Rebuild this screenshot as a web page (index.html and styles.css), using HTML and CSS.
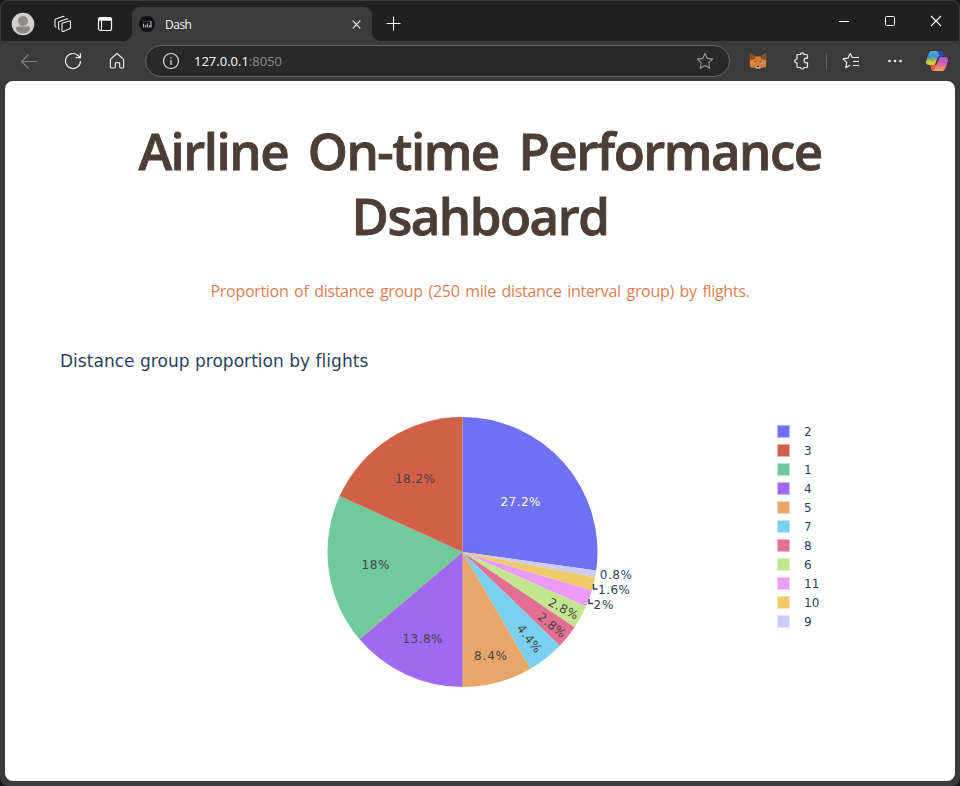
FILE: index.html
```html
<!DOCTYPE html>
<html lang="en">
<head>
<meta charset="utf-8">
<title>Dash</title>
<link rel="stylesheet" href="styles.css">
</head>
<body>
<div class="window">
  <header class="tabstrip">
    <div class="strip-tools">
      <svg class="avatar" width="24" height="24" viewBox="0 0 24 24"><circle cx="12" cy="12" r="11.3" fill="#d0cfcb"/><circle cx="12" cy="9" r="5" fill="#8b8a87"/><path d="M5 16.2q0-1.7 1.7-1.7h10.6q1.7 0 1.7 1.7c-.7 3.3-3.5 5.3-7 5.3s-6.300-2-7-5.300z" fill="#8b8a87"/></svg>
      <svg class="workspaces" width="18" height="18" viewBox="0 0 18 18"><g fill="none" stroke="#eee" stroke-width="1.1" stroke-linejoin="round"><path d="M8 8.300 15.300 6q1.200-.3 1.200.8v5.900q0 .8-.8 1.100l-6.500 2.600q-1.200.4-1.200-.8z"/><path d="M5.800 14.500 5 14.100q-.4-.3-.4-.9V7.700q0-.9.800-1.200l7-2.600q1-.3 1.300.6M2.400 12.300l-.9-.5q-.5-.3-.5-.9V5.300q0-.9.800-1.200l7-2.600q1-.3 1.300.6"/></g></svg>
      <svg class="tabs-icon" width="16" height="16" viewBox="0 0 16 16"><rect x="1.500" y="1.500" width="13" height="13" rx="2" fill="none" stroke="#f5f5f5" stroke-width="1.200"/><path d="M1.500 2.500q0-1 1-1h11q1 0 1 1v2.200h-13z" fill="#f5f5f5"/><path d="M4.500 4.500v10" stroke="#f5f5f5" stroke-width="1.100"/></svg>
    </div>
    <div class="tab">
      <svg width="16" height="16" viewBox="0 0 16 16"><circle cx="8" cy="8" r="8" fill="#101114"/><path d="M4.500 7.500v4M6.500 9v2.500M8.500 7.500v4M10.500 9v2.500M12 5v6.500" stroke="#aeb0b6" stroke-width="1.200"/><path d="M4 5.400h5" stroke="#8e4a78" stroke-width="1" stroke-dasharray="1 1"/><path d="M9.800 5h1" stroke="#669bd0"/></svg>
      <span class="tab-title">Dash</span>
      <svg class="tab-close" width="9" height="9" viewBox="0 0 9 9"><path d="M.7.7l7.600 7.600M8.300.7.7 8.300" stroke="#eee" stroke-width="1.200"/></svg>
    </div>
    <svg class="new-tab" width="15" height="15" viewBox="0 0 15 15"><path d="M7.500 .5v14M.5 7.500h14" stroke="#fff" stroke-width="1.100"/></svg>
    <div class="controls">
      <svg width="12" height="12" viewBox="0 0 12 12"><path d="M1 6.500h10" stroke="#fff"/></svg>
      <svg width="12" height="12" viewBox="0 0 12 12"><rect x="1.500" y="1.500" width="9" height="9" rx="1" fill="none" stroke="#fff"/></svg>
      <svg width="12" height="12" viewBox="0 0 12 12"><path d="m1 1 10 10M11 1 1 11" stroke="#fff" stroke-width="1.100"/></svg>
    </div>
  </header>

  <nav class="toolbar">
    <div class="nav-icons">
      <svg width="18" height="18" viewBox="0 0 18 18"><path d="M17 9.500H1.500M8.500 2.500l-7 7 7 7" fill="none" stroke="#858585" stroke-width="1.100"/></svg>
      <svg width="18" height="18" viewBox="0 0 18 18"><path d="M16.500 9A7.500 7.500 0 1 1 14.600 4l1.900 1.700M16.500 1.200v4.500h-4.700" fill="none" stroke="#eee" stroke-width="1.200"/></svg>
      <svg width="18" height="18" viewBox="0 0 18 18"><path d="M2.400 8q0-.7.500-1.200L8.300 2q.7-.6 1.400 0l5.400 4.800q.5.500.5 1.200v7.200q0 .8-.8.800h-2.200q-.9 0-.9-.9v-3.500q0-1-1-1H8.300q-1 0-1 1v3.500q0 .9-.9.900H3.200q-.8 0-.8-.8z" fill="none" stroke="#eee" stroke-width="1.150"/></svg>
    </div>
    <div class="address">
      <svg width="18" height="18" viewBox="0 0 18 18"><circle cx="9" cy="9" r="7.500" fill="none" stroke="#ddd" stroke-width="1.200"/><path d="M9 8v5M9 5v1.500" stroke="#ddd" stroke-width="1.300"/></svg>
      <span class="url">127.0.0.1<span class="port">:8050</span></span>
      <svg class="fav" width="18" height="18" viewBox="0 0 18 18"><path d="m9 1.500 2.300 4.900 5.300.7-3.900 3.700 1 5.400L9 13.600l-4.700 2.600 1-5.400-3.900-3.700 5.300-.7z" fill="none" stroke="#999" stroke-width="1.100" stroke-linejoin="round"/></svg>
    </div>
    <svg class="fox" width="18" height="18" viewBox="0 0 18 18"><path d="m1 1 5.500 3.500h5L17 1l.3 7L17 15l-5 1-1.500 1h-3L6 16l-5-1L.7 8z" fill="#d97b35"/><path d="m1 1 6 4-2 2.500-4 .5zM17 1l-6 4 2 2.500 4 .5z" fill="#86502c"/><path d="m1 9 4-1 3 3-2 2-5-1zM17 9l-4-1-3 3 2 2 5-1z" fill="#e58a3b"/><path d="m5 9 2 .2.3 1.500zM13 9l-2 .2-.3 1.500z" fill="#263443"/><path d="m7 14 1-.5h2l1 .5-.5 2h-3z" fill="#dfd7d0"/><path d="M7.800 13.800h2.400v1.400H7.800z" fill="#241c22"/></svg>
    <svg class="puzzle" width="18" height="18" viewBox="0 0 18 18"><path d="M5 2.500h2.500C7.500.3 11 .3 11 2.500h2.500q1 0 1 1V6.200h-1.700c-2.200 0-2.200 4.700 0 4.700h1.700v3.600q0 1-1 1H11c0 2-3.500 2-3.500 0H5q-1 0-1-1V11c-3 0-3-4 0-4V3.500q0-1 1-1z" fill="none" stroke="#eee" stroke-width="1.200"/></svg>
    <span class="divider"></span>
    <svg class="favorites" width="18" height="18" viewBox="0 0 18 18"><path d="m10.200 5.400-2-3.900L6 6.200l-5 .7 3.700 3.500-.9 5.200L8 13.300M9.800 5.500H17M11 9.500h6M11 13.500h6" fill="none" stroke="#eee" stroke-width="1.200" stroke-linejoin="round"/></svg>
    <svg class="more" width="14" height="4" viewBox="0 0 14 4"><path d="M1.500 2h.1M7 2h.1M12.500 2h.1" stroke="#eee" stroke-width="2.600" stroke-linecap="round"/></svg>
    <svg class="copilot" width="24" height="22" viewBox="0 0 24 22">
      <defs><linearGradient id="cool" x1="0" y1="0" x2="0" y2="1"><stop stop-color="#55a8ef"/><stop offset=".4" stop-color="#3a91c9"/><stop offset=".8" stop-color="#cfd52d"/><stop offset="1" stop-color="#f0b92d"/></linearGradient><linearGradient id="warm" x1="0" y1="0" x2="0" y2="1"><stop stop-color="#9b54ee"/><stop offset=".5" stop-color="#e25b9f"/><stop offset="1" stop-color="#ffad52"/></linearGradient></defs>
      <path d="M7 1h8q2 0 2.500 2l1 3H15q-2 0-2.500 2L10 15H4q-3 0-3-3 1-5 3-9 1-2 3-2z" fill="url(#cool)"/><path d="M12 1h3q2 0 2.500 2l1 3h-4q-1-4-2.500-5z" fill="#2747c9"/><path d="M17 21H9q-2 0-2.600-2L5.500 15H9q2 0 2.600-2L14 7h6q3 0 3 3-1 5-3 9-1 2-3 2z" fill="url(#warm)"/><path d="M5.500 15H9q1.500 0 2.300-1.200L9.800 19q-.6 2-2 1.500-1-.4-1.400-1.500z" fill="#ec5944"/><path d="M13.500 7h1.300l-3.500 8h-1.500z" fill="#3b3b3b"/>
    </svg>
  </nav>

  <main class="page">
    <h1>Airline On-time Performance<br>Dsahboard</h1>
    <p class="intro">Proportion of distance group (250 mile distance interval group) by flights.</p>
    <section class="chart">
      <h2>Distance group proportion by flights</h2>
      <div class="plot">
        <svg class="pie" width="330" height="280" viewBox="-140.500 -140 330 280">
          <path fill="#6f70f2" d="M0 0V-135A135 135 0 0 1 133.710 18.600z"/>
          <path fill="#cccbfa" d="M0 0 133.710 18.600A135 135 0 0 1 132.610 25.300z"/>
          <path fill="#efcb68" d="M0 0 132.610 25.300A135 135 0 0 1 129.400 38.480z"/>
          <path fill="#eb9cfa" d="M0 0 129.400 38.480A135 135 0 0 1 123.560 54.390z"/>
          <path fill="#c2e68d" d="M0 0 123.560 54.390A135 135 0 0 1 112.130 75.180z"/>
          <path fill="#e36f92" d="M0 0 112.130 75.180A135 135 0 0 1 97.240 93.640z"/>
          <path fill="#7ad1ef" d="M0 0 97.240 93.640A135 135 0 0 1 67.990 116.630z"/>
          <path fill="#e9a66a" d="M0 0 67.990 116.630A135 135 0 0 1 0 135z"/>
          <path fill="#a169f2" d="M0 0V135A135 135 0 0 1-102.930 87.350z"/>
          <path fill="#6fca9c" d="M0 0-102.930 87.350A135 135 0 0 1-122.860-55.940z"/>
          <path fill="#d26048" d="M0 0-122.860-55.940A135 135 0 0 1 0-135z"/>
          <g class="seams"><path d="M0-135V135M0 0-122.860-55.940M0 0-102.930 87.350"/></g>
          <g class="values">
            <text class="light" x="58" y="-46" textLength="40">27.2%</text>
            <text x="-47.500" y="-69" textLength="40">18.2%</text>
            <text x="-87" y="17" textLength="28">18%</text>
            <text x="-40" y="91" textLength="40">13.8%</text>
            <text x="28" y="108" textLength="33">8.4%</text>
            <text transform="translate(67 86.500) rotate(52)" y="4.400" textLength="32">4.4%</text>
            <text transform="translate(89.500 73) rotate(39)" y="4.400" textLength="32">2.8%</text>
            <text transform="translate(101 56.500) rotate(28.800)" y="4.400" textLength="32">2.8%</text>
          </g>
          <g class="values outside">
            <text x="153.300" y="27" textLength="32">0.8%</text>
            <text x="151.500" y="42" textLength="32">1.6%</text>
            <text x="141" y="57" textLength="20">2%</text>
            <path d="M131 32v5h4M126.500 47v4.500h4"/>
          </g>
        </svg>
        <ul class="legend">
          <li><i class="c2"></i>2</li>
          <li><i class="c3"></i>3</li>
          <li><i class="c1"></i>1</li>
          <li><i class="c4"></i>4</li>
          <li><i class="c5"></i>5</li>
          <li><i class="c7"></i>7</li>
          <li><i class="c8"></i>8</li>
          <li><i class="c6"></i>6</li>
          <li><i class="c11"></i>11</li>
          <li><i class="c10"></i>10</li>
          <li><i class="c9"></i>9</li>
        </ul>
      </div>
    </section>
  </main>
</div>
</body>
</html>
```
FILE: styles.css
```css
* { box-sizing: border-box; }
body {
  margin: 0;
  height: 786px;
  overflow: hidden;
  background: #15161a;
  font-family: "Open Sans", "Noto Sans", sans-serif;
}
svg { display: block; flex: none; }
.window {
  height: 786px;
  padding: 1px 1px 0;
  border-radius: 8px;
  background: #3b3b3b;
  overflow: hidden;
}

/* Tab strip */
.tabstrip {
  display: flex;
  height: 40px;
  background: #202020;
  border-radius: 8px 8px 0 0;
}
.strip-tools {
  display: flex;
  align-items: center;
  width: 131px;
  padding: 6px 0 0 10px;
}
.workspaces { margin-left: 19px; }
.tabs-icon { margin-left: 25px; }
.tab {
  position: relative;
  display: flex;
  align-items: center;
  width: 240px;
  height: 34px;
  margin-top: 6px;
  padding: 0 11px 0 7px;
  border-radius: 8px 8px 0 0;
  background: #3b3b3b;
}
.tab::before, .tab::after {
  content: "";
  position: absolute;
  bottom: 0;
  width: 8px;
  height: 8px;
}
.tab::before { right: 100%; background: radial-gradient(circle at 0 0, transparent 7.500px, #3b3b3b 8px); }
.tab::after { left: 100%; background: radial-gradient(circle at 100% 0, transparent 7.500px, #3b3b3b 8px); }
.tab-title { margin-left: 10px; font-size: 12px; letter-spacing: -.5px; color: #f4f4f4; }
.tab-close { margin-left: auto; }
.new-tab { margin: 15px 0 0 14px; }
.controls { display: flex; gap: 34px; margin: 14px 17px 0 auto; }

/* Toolbar */
.toolbar {
  display: flex;
  align-items: center;
  height: 40px;
  padding-left: 19px;
  background: #3b3b3b;
}
.nav-icons { display: flex; gap: 26px; }
.address {
  display: flex;
  align-items: center;
  width: 585px;
  height: 32px;
  margin-left: 19px;
  padding: 0 15px 0 16px;
  border: 1px solid #656565;
  border-radius: 16px;
  background: #292929;
}
.url { margin-left: 14px; font-size: 13px; letter-spacing: 0; color: #fff; }
.port { color: #8d8d8d; }
.fav { margin-left: auto; }
.fox { margin-left: 19px; }
.puzzle { margin-left: 26px; }
.divider { width: 1px; height: 16px; margin-left: 15px; background: #606060; }
.favorites { margin-left: 15px; }
.more { margin-left: 28px; }
.copilot { margin-left: 23px; }

/* Dashboard */
.page {
  height: 700px;
  margin: 0 4px;
  border-radius: 8px;
  background: #fff;
  overflow: hidden;
}
h1 {
  margin: 37px 0 0;
  font-size: 51px;
  line-height: 65px;
  font-weight: 600;
  letter-spacing: -1.500px;
  word-spacing: 8px;
  text-align: center;
  white-space: nowrap;
  color: #4c3d35;
  -webkit-text-stroke: .8px #4c3d35;
}
.intro {
  margin: 31px 0 0;
  font-size: 16px;
  line-height: 24px;
  letter-spacing: -.300px;
  word-spacing: 1.800px;
  text-align: center;
  white-space: nowrap;
  color: #db7f53;
}
.chart { font-family: "DejaVu Sans", sans-serif; }
h2 {
  margin: 47px 0 0 55px;
  font-size: 17px;
  line-height: 22px;
  font-weight: 400;
  letter-spacing: .030px;
  color: #2a3f5f;
}
.plot { display: flex; margin: 39px 0 0 317px; }
.pie { margin-top: 1px; }
.seams { fill: none; stroke: #b99f91; stroke-width: .7; }
.values { font-size: 12px; fill: #444; text-anchor: middle; }
.values .light { fill: #fff; }
.outside text { fill: #2a3f5f; }
.outside path { fill: none; stroke: #2a3f5f; stroke-width: 1.500; }
.legend {
  margin: 11px 0 0 125px;
  padding: 0;
  list-style: none;
  font-size: 12px;
  color: #2a3f5f;
}
.legend li { display: flex; align-items: center; height: 19px; }
.legend i {
  width: 13px;
  height: 13px;
  margin-right: 14px;
  border: 1px solid rgba(255, 255, 255, .5);
}
.c1 { background: #6fca9c; }
.c2 { background: #6f70f2; }
.c3 { background: #d26048; }
.c4 { background: #a169f2; }
.c5 { background: #e9a66a; }
.c6 { background: #c2e68d; }
.c7 { background: #7ad1ef; }
.c8 { background: #e36f92; }
.c9 { background: #cccbfa; }
.c10 { background: #efcb68; }
.c11 { background: #eb9cfa; }
```
